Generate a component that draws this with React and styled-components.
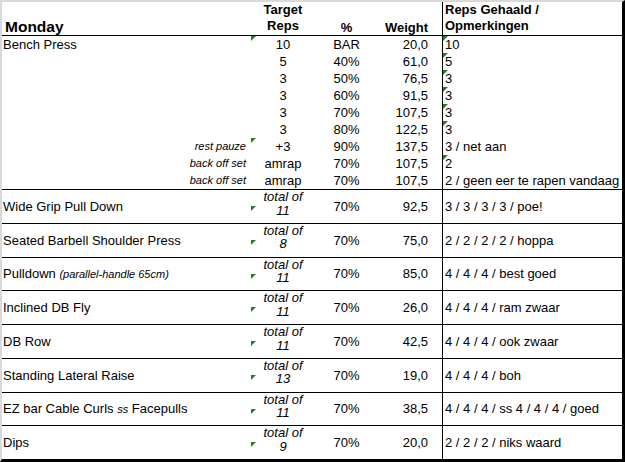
import React from "react";
import styled, { createGlobalStyle } from "styled-components";

const GlobalStyle = createGlobalStyle`
  html, body {
    margin: 0;
    padding: 0;
    background: #ffffff;
  }
  body {
    font-family: "Liberation Sans", Arial, sans-serif;
    color: #000000;
  }
`;

const COLUMNS = "248px 66px 61px 65px 1fr";

const Sheet = styled.div`
  box-sizing: border-box;
  width: 625px;
  height: 462px;
  border-top: 2px solid #d9d9d9;
  border-left: 2px solid #d9d9d9;
  border-right: 3px solid #000000;
  border-bottom: 3px solid #000000;
  display: flex;
  flex-direction: column;
  font-size: 13px;
  overflow: hidden;
`;

const Row = styled.div`
  display: grid;
  grid-template-columns: ${COLUMNS};
  align-items: center;
  box-sizing: border-box;
`;

const HeaderRow = styled(Row)`
  height: 34px;
  flex: none;
  align-items: end;
  border-bottom: 1px solid #000000;
  font-weight: bold;
`;

const SetRow = styled(Row)`
  height: 17px;
  flex: none;
  line-height: 17px;
`;

const ExerciseRow = styled(Row)`
  flex: 1;
  min-height: 0;
  border-top: 1px solid #000000;
`;

const HeadCell = styled.div`
  align-self: stretch;
  display: flex;
  flex-direction: column;
  justify-content: flex-end;
  text-align: ${(p) => p.align || "left"};
  padding: 0 ${(p) => p.padRight || 0}px ${(p) => p.padBottom || 0}px ${(p) => p.padLeft || 0}px;
  line-height: 15.5px;
  white-space: nowrap;
`;

const DayTitle = styled(HeadCell)`
  font-size: 15.5px;
  line-height: 16px;
`;

const NoteHead = styled(HeadCell)`
  border-left: 1px solid #000000;
`;

const NameCell = styled.div`
  padding-left: 1px;
  white-space: nowrap;
`;

const SetLabel = styled.div`
  font-size: 11px;
  font-style: italic;
  text-align: right;
  padding-right: 4px;
  white-space: nowrap;
`;

const Small = styled.span`
  font-size: 11px;
  font-style: italic;
`;

const TargetCell = styled.div`
  position: relative;
  align-self: stretch;
  text-align: center;
  font-style: ${(p) => (p.italic ? "italic" : "normal")};
  line-height: ${(p) => (p.italic ? "13.5px" : "17px")};
`;

const CenterCell = styled.div`
  text-align: center;
`;

const WeightCell = styled.div`
  text-align: right;
  padding-right: 14px;
`;

const NoteCell = styled.div`
  position: relative;
  align-self: stretch;
  display: flex;
  align-items: center;
  border-left: 1px solid #000000;
  padding-left: 2px;
  white-space: nowrap;
`;

const Flag = styled.span`
  position: absolute;
  left: ${(p) => p.left || 0}px;
  top: ${(p) => p.top || 0}px;
  width: 0;
  height: 0;
  border-top: 5px solid #2b7a2b;
  border-right: 5px solid transparent;
`;

const benchSets = [
  { target: "10", pct: "BAR", weight: "20,0", note: "10", tFlag: true, nFlag: true },
  { target: "5", pct: "40%", weight: "61,0", note: "5", nFlag: true },
  { target: "3", pct: "50%", weight: "76,5", note: "3", nFlag: true },
  { target: "3", pct: "60%", weight: "91,5", note: "3", nFlag: true },
  { target: "3", pct: "70%", weight: "107,5", note: "3", nFlag: true },
  { target: "3", pct: "80%", weight: "122,5", note: "3", nFlag: true },
  { label: "rest pauze", target: "+3", pct: "90%", weight: "137,5", note: "3 / net aan", tFlag: true },
  { label: "back off set", target: "amrap", pct: "70%", weight: "107,5", note: "2", nFlag: true },
  { label: "back off set", target: "amrap", pct: "70%", weight: "107,5", note: "2 / geen eer te rapen vandaag" },
];

const exercises = [
  { name: "Wide Grip Pull Down", total: "11", weight: "92,5", note: "3 / 3 / 3 / 3 / poe!" },
  { name: "Seated Barbell Shoulder Press", total: "8", weight: "75,0", note: "2 / 2 / 2 / 2 / hoppa" },
  {
    name: (
      <>
        Pulldown <Small>(parallel-handle 65cm)</Small>
      </>
    ),
    total: "11",
    weight: "85,0",
    note: "4 / 4 / 4 / best goed",
  },
  { name: "Inclined DB Fly", total: "11", weight: "26,0", note: "4 / 4 / 4 / ram zwaar" },
  { name: "DB Row", total: "11", weight: "42,5", note: "4 / 4 / 4 / ook zwaar" },
  { name: "Standing Lateral Raise", total: "13", weight: "19,0", note: "4 / 4 / 4 / boh" },
  {
    name: (
      <>
        EZ bar Cable Curls <Small>ss</Small> Facepulls
      </>
    ),
    total: "11",
    weight: "38,5",
    note: "4 / 4 / 4 / ss 4 / 4 / 4 / goed",
  },
  { name: "Dips", total: "9", weight: "20,0", note: "2 / 2 / 2 / niks waard" },
];

export default function App() {
  return (
    <>
      <GlobalStyle />
      <Sheet>
        <HeaderRow>
          <DayTitle padLeft={3} padBottom={1}>Monday</DayTitle>
          <HeadCell align="center" padBottom={3}>
            <span>Target</span>
            <span>Reps</span>
          </HeadCell>
          <HeadCell align="center" padBottom={1}>%</HeadCell>
          <HeadCell align="right" padRight={14} padBottom={1}>Weight</HeadCell>
          <NoteHead padLeft={2} padBottom={3}>
            <span>Reps Gehaald /</span>
            <span>Opmerkingen</span>
          </NoteHead>
        </HeaderRow>

        {benchSets.map((s, i) => (
          <SetRow key={i}>
            {i === 0 ? <NameCell>Bench Press</NameCell> : <SetLabel>{s.label || ""}</SetLabel>}
            <TargetCell>
              {s.tFlag && <Flag left={1} />}
              {s.target}
            </TargetCell>
            <CenterCell>{s.pct}</CenterCell>
            <WeightCell>{s.weight}</WeightCell>
            <NoteCell>
              {s.nFlag && <Flag />}
              {s.note}
            </NoteCell>
          </SetRow>
        ))}

        {exercises.map((e, i) => (
          <ExerciseRow key={i}>
            <NameCell>{e.name}</NameCell>
            <TargetCell italic>
              <Flag left={1} top={16} />
              <div>total of</div>
              <div>{e.total}</div>
            </TargetCell>
            <CenterCell>70%</CenterCell>
            <WeightCell>{e.weight}</WeightCell>
            <NoteCell>{e.note}</NoteCell>
          </ExerciseRow>
        ))}
      </Sheet>
    </>
  );
}
